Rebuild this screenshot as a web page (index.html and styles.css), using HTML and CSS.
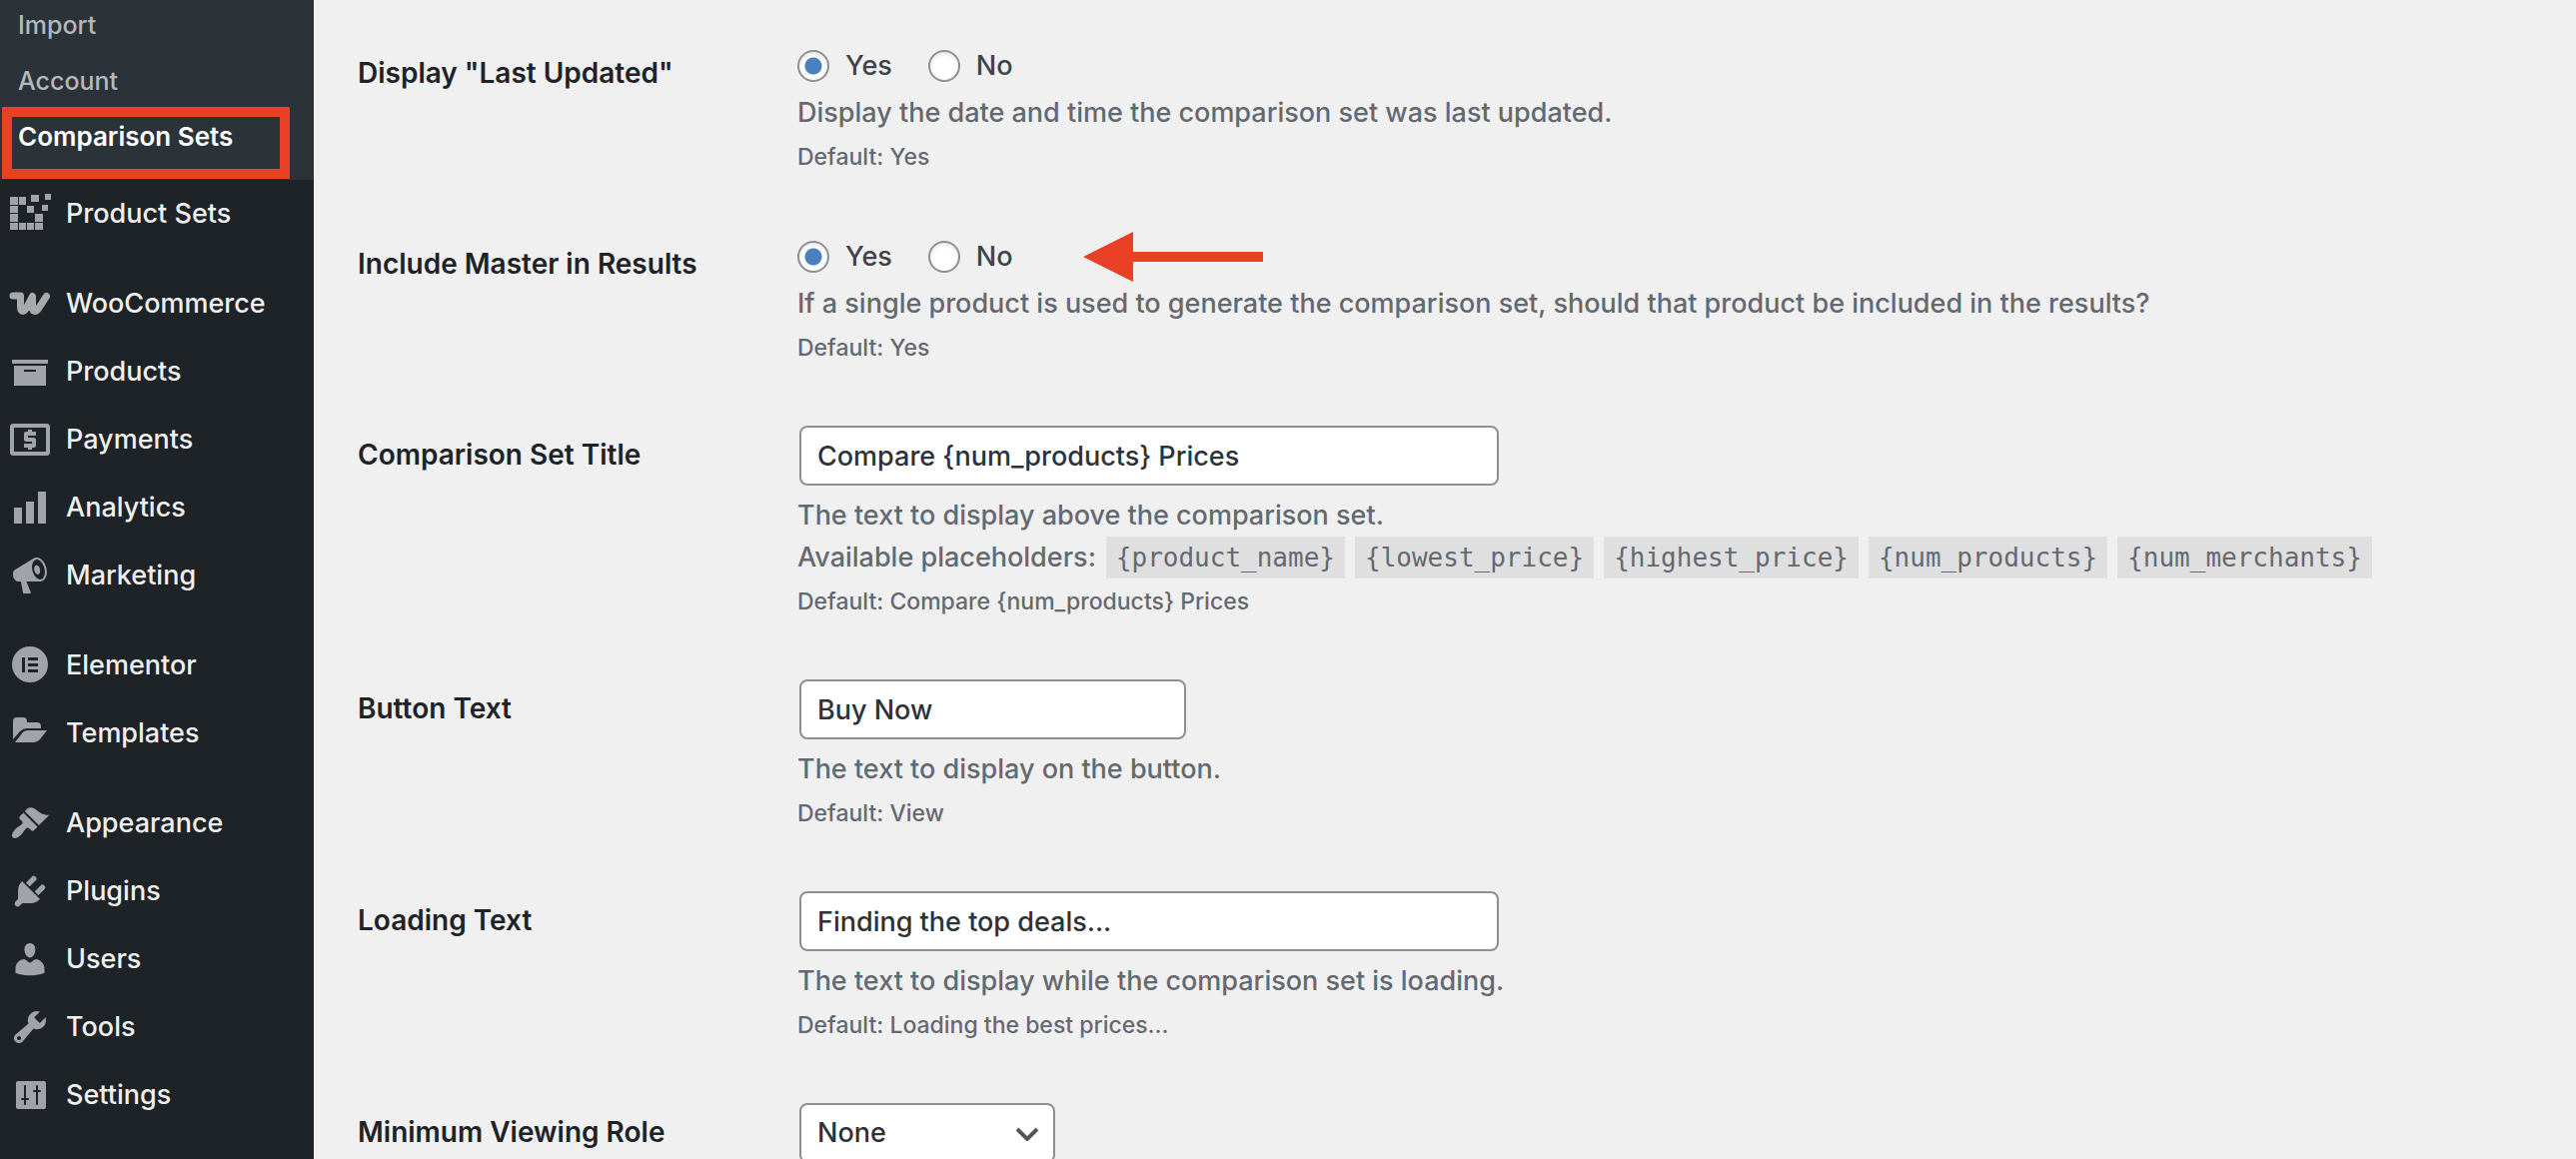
FILE: index.html
```html
<!DOCTYPE html>
<html lang="en">
<head>
<meta charset="utf-8">
<title>Comparison Sets</title>
<link rel="stylesheet" href="styles.css">
</head>
<body>
<div class="layout">
  <nav class="sidebar" aria-label="Main menu">
    <ul class="submenu">
      <li><a href="#">Import</a></li>
      <li><a href="#">Account</a></li>
      <li class="highlighted"><a href="#" class="current">Comparison Sets</a></li>
    </ul>
    <ul class="menu">
      <li><a href="#"><svg class="icon" viewBox="0 0 40 40"><path d="M0 3h8v8H0zM9 3h7v8H9zM0 12h8v7H0zM0 20h8v8H0zM0 29h8v7H0zM9 29h7v7H9zM17 29h7v7h-7zM25 29h8v7h-8zM25 20h8v8h-8zM17 12h7v7h-7zM21 1h8v7h-8zM32 11h6v6h-6zM35 0h6v6h-6z"/></svg>Product Sets</a></li>
    </ul>
    <ul class="menu">
      <li><a href="#"><svg class="icon" viewBox="0 0 40 40"><path class="woo" d="M3 12H10.500V22.500C10.500 29 14 28.500 16.500 24L22.500 12.500V23C22.500 29 26.500 28.500 29 24L36.500 12.500"/></svg>WooCommerce</a></li>
      <li><a href="#"><svg class="icon" viewBox="0 0 20 20"><path d="M19 4v2H1V4h18zM2 7h16v10H2V7zm11 3V9H7v1h6z"/></svg>Products</a></li>
      <li><a href="#"><svg class="icon" viewBox="2 2 20 20"><path d="M11 17h2v-1h1c.55 0 1-.45 1-1v-3c0-.55-.45-1-1-1h-3v-1h4V8h-2V7h-2v1h-1c-.55 0-1 .45-1 1v3c0 .55.45 1 1 1h3v1H9v2h2v1zM20.500 4h-17C2.700 4 2 4.700 2 5.500v13c0 .8.700 1.500 1.500 1.500h17c.8 0 1.500-.7 1.500-1.500v-13C22 4.700 21.300 4 20.500 4zM20 18H4V6h16v12z"/></svg>Payments</a></li>
      <li><a href="#"><svg class="icon" viewBox="0 0 20 20"><path d="M18 18V2h-4v16h4zm-6 0V7H8v11h4zm-6 0v-8H2v8h4z"/></svg>Analytics</a></li>
      <li><a href="#"><svg class="icon" viewBox="0 0 20 20"><path d="M18.150 5.940c.46 1.620.38 3.220-.02 4.480-.42 1.280-1.260 2.180-2.300 2.480-.16.060-.26.060-.4.060-.06.020-.12.020-.18.020-.06.020-.14.020-.22.020h-6.800l2.220 5.500c.02.140-.06.260-.14.340-.08.100-.24.160-.34.160H6.950c-.1 0-.26-.06-.34-.16-.08-.08-.16-.2-.14-.34l-1-5.500H4.250l-.02-.02c-.5.060-1.080-.18-1.540-.62s-.88-1.080-1.060-1.880c-.24-.8-.2-1.560-.02-2.200.18-.62.580-1.080 1.060-1.300l.02-.02 9-5.400c.1-.06.180-.1.240-.16.060-.04.140-.08.240-.12.160-.08.280-.12.500-.18 1.040-.3 2.240.1 3.220.98s1.840 2.240 2.260 3.860zm-2.580 5.980h-.02c.4-.1.740-.34 1.040-.7.580-.7.860-1.760.860-3.040 0-.64-.1-1.300-.28-1.980-.34-1.360-1.020-2.500-1.780-3.240s-1.680-1.100-2.460-.88c-.82.220-1.400.960-1.700 2-.32 1.040-.28 2.360.060 3.720.38 1.360 1 2.500 1.800 3.240.78.740 1.620 1.100 2.480.88zm-2.540-7.080c.22-.04.420-.02.620.04.380.160.760.480 1.020 1s.420 1.200.420 1.780c0 .3-.04.560-.12.800-.18.480-.44.840-.86.940-.34.100-.8-.06-1.140-.4s-.64-.86-.78-1.500c-.18-.62-.12-1.240.020-1.720s.480-.84.820-.94z"/></svg>Marketing</a></li>
    </ul>
    <ul class="menu">
      <li><a href="#"><svg class="icon" viewBox="0 0 40 40"><path fill-rule="evenodd" d="M20 1a18 18 0 1 0 0 36a18 18 0 1 0 0-36zM12 12h3v15h-3zM18 12h10v3H18zM18 18h10v3H18zM18 24h10v3H18z"/></svg>Elementor</a></li>
      <li><a href="#"><svg class="icon" viewBox="0 0 40 40"><path d="M3 26V8q0-4 4-4h6q4 0 4 4v1h10q4 0 4 4v2H17q-4 0-7 3zM5 29l7-9q2-3 6-3h19l-7 9q-3 3-6 3z"/></svg>Templates</a></li>
    </ul>
    <ul class="menu">
      <li><a href="#"><svg class="icon" viewBox="0 0 20 20"><path d="M14.480 11.060L7.410 3.990l1.500-1.500c.5-.56 2.300-.47 3.510.32 1.210.8 1.430 1.280 2.910 2.100 1.180.64 2.450 1.260 4.450.85zm-.71.710L6.700 4.700 4.930 6.470c-.39.390-.39 1.020 0 1.410l1.060 1.060c.39.390.39 1.030 0 1.420-.6.600-1.430 1.110-2.210 1.690-.35.260-.7.530-1.010.84C1.430 14.230.4 16.080 1.400 17.070c.99 1 2.840-.03 4.180-1.360.31-.31.580-.66.850-1.020.57-.78 1.080-1.610 1.690-2.210.39-.39 1.020-.39 1.410 0l1.060 1.060c.39.390 1.020.39 1.410 0z"/></svg>Appearance</a></li>
      <li><a href="#"><svg class="icon" viewBox="0 0 20 20"><path d="M13.110 4.360L9.870 7.600 8 5.730l3.240-3.240c.35-.34 1.050-.2 1.560.32.520.51.660 1.210.31 1.550zm-8 1.770l.91-1.120 9.010 9.010-1.190.84c-.71.710-2.630 1.160-3.820 1.160H6.140L4.900 17.260c-.59.590-1.540.59-2.120 0-.59-.58-.59-1.530 0-2.120l1.240-1.240v-3.880c0-1.130.4-3.190 1.090-3.890zm7.260 3.970l3.240-3.240c.34-.35 1.040-.21 1.550.31.520.51.660 1.210.31 1.550l-3.240 3.250z"/></svg>Plugins</a></li>
      <li><a href="#"><svg class="icon" viewBox="0 0 20 20"><path d="M10 9.250c-2.270 0-2.730-3.440-2.730-3.440C7 4.020 7.820 2 9.970 2c2.160 0 2.980 2.020 2.710 3.810 0 0-.41 3.440-2.680 3.440zm0 2.570L12.720 10c2.390 0 4.520 2.330 4.520 4.530v2.490s-3.650 1.130-7.240 1.130c-3.650 0-7.240-1.130-7.240-1.130v-2.490c0-2.250 1.940-4.480 4.470-4.480z"/></svg>Users</a></li>
      <li><a href="#"><svg class="icon" viewBox="0 0 20 20"><path d="M16.680 9.770c-1.340 1.340-3.300 1.670-4.950.99l-5.410 6.520c-.99.990-2.590.99-3.580 0s-.99-2.590 0-3.570l6.520-5.420c-.68-1.650-.35-3.610.99-4.950 1.280-1.280 3.120-1.620 4.720-1.060l-2.890 2.890 2.820 2.820 2.860-2.870c.53 1.580.18 3.390-1.080 4.650zM3.810 16.210c.4.390 1.040.39 1.430 0 .4-.4.400-1.040 0-1.430-.39-.4-1.030-.4-1.430 0-.39.390-.39 1.030 0 1.430z"/></svg>Tools</a></li>
      <li><a href="#"><svg class="icon" viewBox="0 0 40 40"><rect x="6" y="6" width="30" height="28" rx="2"/><path class="cut" d="M15 11v18M12 24h6M27 11v18M24 16h6"/></svg>Settings</a></li>
    </ul>
  </nav>

  <main class="content">
    <form class="settings">
      <div class="row" role="radiogroup" aria-labelledby="updated-title">
        <div class="title" id="updated-title">Display "Last Updated"</div>
        <div class="field">
          <div class="radios">
            <label><input type="radio" name="updated" checked>Yes</label>
            <label><input type="radio" name="updated">No</label>
          </div>
          <p class="description">Display the date and time the comparison set was last updated.</p>
          <p class="default">Default: Yes</p>
        </div>
      </div>
      <div class="row" role="radiogroup" aria-labelledby="master-title">
        <div class="title" id="master-title">Include Master in Results</div>
        <div class="field">
          <div class="radios">
            <label><input type="radio" name="master" checked>Yes</label>
            <label><input type="radio" name="master">No</label>
            <svg class="arrow" viewBox="0 0 180 50" aria-hidden="true"><path d="M0 25L50 0V20H180V30H50V50z"/></svg>
          </div>
          <p class="description">If a single product is used to generate the comparison set, should that product be included in the results?</p>
          <p class="default">Default: Yes</p>
        </div>
      </div>
      <div class="row">
        <label class="title" for="set-title">Comparison Set Title</label>
        <div class="field">
          <input class="text wide" type="text" id="set-title" value="Compare {num_products} Prices">
          <p class="description">The text to display above the comparison set.</p>
          <p class="description placeholders"><span>Available placeholders:</span> <code>{product_name}</code> <code>{lowest_price}</code> <code>{highest_price}</code> <code>{num_products}</code> <code>{num_merchants}</code></p>
          <p class="default">Default: Compare {num_products} Prices</p>
        </div>
      </div>
      <div class="row">
        <label class="title" for="button-text">Button Text</label>
        <div class="field">
          <input class="text" type="text" id="button-text" value="Buy Now">
          <p class="description">The text to display on the button.</p>
          <p class="default">Default: View</p>
        </div>
      </div>
      <div class="row">
        <label class="title" for="loading-text">Loading Text</label>
        <div class="field">
          <input class="text wide" type="text" id="loading-text" value="Finding the top deals...">
          <p class="description">The text to display while the comparison set is loading.</p>
          <p class="default">Default: Loading the best prices...</p>
        </div>
      </div>
      <div class="row">
        <label class="title" for="role">Minimum Viewing Role</label>
        <div class="field">
          <div class="select">
            <select id="role"><option>None</option></select>
            <svg class="chevron" viewBox="0 0 24 14" aria-hidden="true"><path d="M2 2l10 10L22 2"/></svg>
          </div>
        </div>
      </div>
    </form>
  </main>
</div>
</body>
</html>
```
FILE: styles.css
```css
* {
  box-sizing: border-box;
}

body {
  margin: 0;
  background: #f0f0f1;
  color: #3c434a;
  font-family: Inter, "Liberation Sans", sans-serif;
  font-size: 27px;
  font-weight: 450;
  line-height: 42px;
}

.layout {
  display: flex;
  height: 100vh;
  overflow: hidden;
}

/* Sidebar */
.sidebar {
  flex: none;
  width: 314px;
  background: #1d2327;
}

.sidebar ul {
  margin: 0;
  padding: 0;
  list-style: none;
}

.sidebar a {
  display: flex;
  align-items: center;
  color: #f0f0f1;
  text-decoration: none;
  white-space: nowrap;
}

.sidebar .submenu {
  margin-top: -3px;
  padding-bottom: 15px;
  background: #2c3338;
}

.submenu li {
  position: relative;
}

.submenu a {
  height: 56px;
  padding-left: 18px;
  color: #b4b9be;
  font-size: 25px;
}

.submenu .current {
  color: #fff;
  font-size: 26px;
  font-weight: 600;
}

.highlighted::after {
  content: "";
  position: absolute;
  top: -2px;
  right: 24px;
  bottom: -14px;
  left: 2px;
  border: 10px solid #ea4025;
}

.menu a {
  height: 68px;
  padding-left: 10px;
  gap: 16px;
}

.sidebar .menu + .menu {
  margin-top: 22px;
}

.icon {
  flex: none;
  width: 40px;
  height: 40px;
  overflow: visible;
  fill: #a0a4a8;
}

.icon .woo {
  fill: none;
  stroke: #a7aaad;
  stroke-width: 7;
  stroke-linecap: round;
  stroke-linejoin: round;
}

.icon .cut {
  stroke: #1d2327;
  stroke-width: 2;
  stroke-linecap: round;
}

/* Settings form */
.content {
  flex: 1;
  min-width: 0;
  padding: 14px 40px 0 44px;
}

.row {
  display: grid;
  grid-template-columns: 440px 1fr;
  padding: 30px 0;
}

.title {
  padding-top: 11px;
  color: #1d2327;
  font-size: 28px;
  font-weight: 600;
  line-height: 36px;
}

.field p {
  margin: 0;
}

.field .description {
  color: #646970;
}

.field .default {
  margin-top: 5px;
  color: #646970;
  font-size: 23px;
  line-height: 36px;
}

.radios {
  display: flex;
  align-items: center;
  gap: 36px;
  height: 43px;
  margin-bottom: 5px;
}

.radios label {
  display: flex;
  align-items: center;
  gap: 16px;
}

.radios input {
  appearance: none;
  width: 32px;
  height: 32px;
  margin: 0;
  border: 2px solid #8c8f94;
  border-radius: 50%;
  background: #fff;
  box-shadow: inset 0 2px 4px rgba(0, 0, 0, 0.1);
}

.radios input:checked {
  background: radial-gradient(circle, #4a80c0 8px, #fff 9px);
}

.arrow {
  width: 180px;
  height: 50px;
  margin-left: 34px;
  fill: #ea4025;
}

.text,
.select select {
  display: block;
  height: 60px;
  border: 2px solid #8c8f94;
  border-radius: 8px;
  background: #fff;
  color: #2c3338;
  font: inherit;
}

.text {
  width: 387px;
  margin: 0 2px 9px;
  padding: 0 16px;
}

.text.wide {
  width: 700px;
}

.placeholders {
  display: flex;
  gap: 10px;
}

code {
  padding: 0 10px;
  background: #dfdfe0;
  font-family: "DejaVu Sans Mono", monospace;
  font-size: 26px;
}

.select {
  position: relative;
  width: 256px;
  margin-left: 2px;
}

.select select {
  appearance: none;
  width: 100%;
  padding: 0 48px 0 16px;
}

.chevron {
  position: absolute;
  top: 24px;
  right: 16px;
  width: 24px;
  height: 14px;
  fill: none;
  stroke: #50575e;
  stroke-width: 4;
  pointer-events: none;
}
```
